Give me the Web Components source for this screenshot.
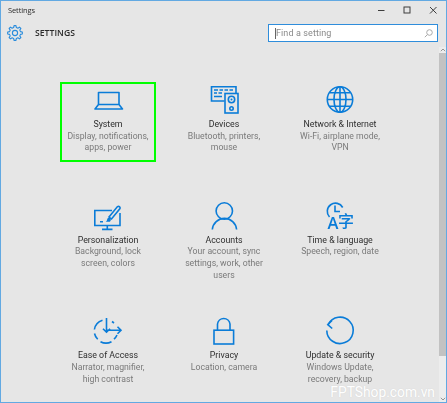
<!DOCTYPE html>
<html lang="en"><head><meta charset="utf-8"><title>Settings</title>
<style>
html,body{margin:0;padding:0;background:#e6e6e6}
body{font-family:Roboto,"Liberation Sans",sans-serif;width:447px;height:403px;overflow:hidden}
svg.i{display:block;overflow:visible}
.s{fill:none;stroke:#0a7cd8;stroke-width:1.6}
</style></head><body>
<template id="t-window"><style>
:host{display:flex;flex-direction:column;position:relative;box-sizing:border-box;width:447px;height:403px;border:1px solid #62a9e2;background:#e6e6e6;overflow:hidden}
.blur{display:flex;flex-direction:column;flex:1;min-height:0;filter:blur(.3px)}
.body{display:flex;flex:1;min-height:0}
.main{flex:1;min-width:0}
</style><div class="blur"><slot name="bar"></slot><slot name="head"></slot><div class="body"><div class="main"><slot></slot></div><slot name="scroll"></slot></div></div><slot name="over"></slot></template>

<template id="t-bar"><style>
:host{display:flex;align-items:center;height:18px;flex:none;padding:0 0 0 7px}
.t{flex:1;font:7.5px/10px "Open Sans",sans-serif;color:#2b2b2b;letter-spacing:-.1px}
.c{display:flex}
.c span{display:flex;width:26px;height:18px;align-items:center;justify-content:center}
svg{display:block;fill:none;stroke:#3c3c3c;stroke-width:1}
</style><div class="t"><slot></slot></div><div class="c">
<span><svg width="8" height="8"><path d="M1 4.5H7.5"/></svg></span>
<span><svg width="8" height="8"><rect x="1" y="1" width="6" height="6"/></svg></span>
<span><svg width="8" height="8"><path d="M1 1L7.5 7.5M7.5 1L1 7.5"/></svg></span></div></template>

<template id="t-head"><style>
:host{display:flex;align-items:center;flex:none;height:28px;padding:0 8px 0 5.5px;box-sizing:border-box}
svg{display:block;margin-right:12.5px;flex:none}
.l{flex:1;font:600 8.6px/12px "Open Sans",sans-serif;color:#2a2a2a;letter-spacing:.05px}
</style><svg id="g" width="16" height="16" viewBox="0 0 16 16"></svg><div class="l"><slot></slot></div><slot name="search"></slot></template>

<template id="t-search"><style>
:host{display:flex;align-items:center;box-sizing:border-box;width:170px;height:18px;border:1.5px solid #2f8ddb;background:#fff;padding:0 4px 0 6px}
.caret{width:1px;height:11px;background:#666;flex:none}
.p{flex:1;font:9px/12px Roboto,sans-serif;color:#8a8a8a;letter-spacing:.1px}
svg{display:block;fill:none;stroke:#aaa;stroke-width:1}
</style><span class="caret"></span><div class="p"><slot></slot></div>
<svg width="9" height="9"><circle cx="5.5" cy="3.5" r="2.8"/><path d="M3.5 5.5L.8 8.2"/></svg></template>

<template id="t-grid"><style>
:host{display:grid;grid-template-columns:repeat(3,116px);grid-template-rows:115.7px 115.7px auto;padding:35px 0 0 49px;box-sizing:border-box;height:100%}
</style><slot></slot></template>

<template id="t-tile"><style>
:host{display:block;min-width:0}
.box{box-sizing:border-box;margin:0 10px;min-height:80px;padding-top:2px;border:2px solid transparent;display:flex;flex-direction:column;align-items:center;text-align:center;white-space:nowrap}
:host([selected]) .box{border-color:#00ff00}
.ic{height:28px;margin-bottom:5px}
.n{font:400 8.8px/11.7px Roboto,sans-serif;color:#2e2e2e}
.d{font:400 8.7px/11.7px Roboto,sans-serif;color:#7a7a7a}
::slotted(span){display:block}
</style><div class="box"><div class="ic"><slot name="icon"></slot></div><div class="n"><slot name="name"></slot></div><div class="d"><slot name="desc"></slot></div></div></template>

<template id="t-scroll"><style>
:host{display:flex;flex-direction:column;width:7px;flex:none;background:#ededed}
.a{height:6px;display:flex;align-items:center;justify-content:center;flex:none}
.th{height:303px;background:#c2c2c2;flex:none}
.tr{flex:1}
svg{display:block;fill:none;stroke:#8a8a8a;stroke-width:.9}
</style><div class="a"><svg width="6" height="4"><path d="M.8 3.2L3 1L5.2 3.2"/></svg></div><div class="th"></div><div class="tr"></div><div class="a"><svg width="6" height="4"><path d="M.8 .8L3 3L5.2 .8"/></svg></div></template>

<template id="t-mark"><style>
:host{position:absolute;right:11px;bottom:2px;font:400 13.8px/16px Roboto,"Open Sans",sans-serif;color:#fff;text-shadow:0 0 1px rgba(150,150,150,.3)}
</style><slot></slot></template>

<settings-window>
<title-bar slot="bar">Settings</title-bar>
<settings-head slot="head">SETTINGS<search-box slot="search">Find a setting</search-box></settings-head>
<tile-grid>
<setting-tile selected>
<svg slot="icon" class="i" width="40" height="28"><path class="s" d="M10.5 18.5V6.5H31V18.5M10.5 18.5H31M10.5 18.5L7 23H34.5L31 18.5" stroke-linejoin="round"/></svg>
<span slot="name">System</span><span slot="desc">Display, notifications,</span><span slot="desc">apps, power</span></setting-tile>
<setting-tile>
<svg slot="icon" class="i" width="40" height="28"><path class="s" d="M20.5 15H7.5V.8H32V7"/><rect class="s" x="21" y="7.5" width="13" height="19.5"/><circle class="s" cx="27.5" cy="13.5" r="3.2"/><circle cx="27.5" cy="13.5" r="1" fill="#0a7cd8"/><circle class="s" cx="27.5" cy="22.5" r="1.7"/><path d="M10 4H14M15.5 4H19M20.5 4H24M25.5 4H29M10 7H13M14.5 7H18M10 10.5H18" stroke="#0a7cd8" stroke-width="1.4" fill="none"/></svg>
<span slot="name">Devices</span><span slot="desc">Bluetooth, printers,</span><span slot="desc">mouse</span></setting-tile>
<setting-tile>
<svg slot="icon" class="i" width="40" height="28"><circle class="s" cx="20" cy="13.5" r="12.7"/><ellipse class="s" cx="20" cy="13.5" rx="6" ry="12.7"/><path class="s" d="M20 .8V26.2M7.3 13.5H32.7M9.5 6.8H30.5M9.5 20.2H30.5"/></svg>
<span slot="name">Network &amp; Internet</span><span slot="desc">Wi-Fi, airplane mode,</span><span slot="desc">VPN</span></setting-tile>
<setting-tile>
<svg slot="icon" class="i" width="40" height="28"><path class="s" d="M24 8.5H6.8V23.5H32V11M19.3 23.5V27M14 27.4H24.5M12 19.7H15"/><path d="M21 15L29.5 4.6A1.7 1.7 0 0 1 32 6.6L23.5 17Z" fill="none" stroke="#0a7cd8" stroke-width="1.6"/><path d="M16 19.8C18.5 20 19 18.8 19.2 17.2C19.5 15.7 21 15.3 22 16.1C23.3 17.2 23 19 21.8 19.7H16Z" fill="#0a7cd8"/></svg>
<span slot="name">Personalization</span><span slot="desc">Background, lock</span><span slot="desc">screen, colors</span></setting-tile>
<setting-tile>
<svg slot="icon" class="i" width="40" height="28"><circle class="s" cx="20.3" cy="9" r="8.2"/><path class="s" d="M8.3 27.5A12.2 12.2 0 0 1 32.6 27.5"/></svg>
<span slot="name">Accounts</span><span slot="desc">Your account, sync</span><span slot="desc">settings, work, other</span><span slot="desc">users</span></setting-tile>
<setting-tile>
<svg slot="icon" class="i" width="40" height="34"><path class="s" d="M9.5 15A8.2 8.2 0 1 1 22.7 5.5M15 3.5V9.5H20"/><text x="7.5" y="27.3" font-family="Open Sans,sans-serif" font-size="16.5" font-weight="600" fill="#0a7cd8">A</text><text x="18" y="24.6" font-family="Noto Sans CJK SC,sans-serif" font-size="16" font-weight="500" fill="#0a7cd8">字</text></svg>
<span slot="name">Time &amp; language</span><span slot="desc">Speech, region, date</span></setting-tile>
<setting-tile>
<svg slot="icon" class="i" width="40" height="28"><path class="s" d="M14.5 3.2A11.6 11.6 0 0 0 6.4 12.5M6.5 16.5A11.6 11.6 0 0 0 9.7 22.2M12.5 24.7A11.6 11.6 0 0 0 23.5 24.7M26 22.2A11.6 11.6 0 0 0 29 18M24 4.5L26 6"/><path class="s" d="M18.5 1V15M15 11.7L18.5 15.2L22 11.7M18.5 13.2H33M29.5 9.7L33 13.2L29.5 16.7"/></svg>
<span slot="name">Ease of Access</span><span slot="desc">Narrator, magnifier,</span><span slot="desc">high contrast</span></setting-tile>
<setting-tile>
<svg slot="icon" class="i" width="40" height="28"><rect class="s" x="10" y="13.2" width="19.6" height="13.8"/><path class="s" d="M13.5 13V7A6.3 6.3 0 0 1 26 7V13"/></svg>
<span slot="name">Privacy</span><span slot="desc">Location, camera</span></setting-tile>
<setting-tile>
<svg slot="icon" class="i" width="40" height="28"><path class="s" d="M8.2 7.4A13.2 13.2 0 1 1 6.8 13.4"/><path class="s" d="M12 3.4L7.8 7.6L12.2 11.5"/></svg>
<span slot="name">Update &amp; security</span><span slot="desc">Windows Update,</span><span slot="desc">recovery, backup</span></setting-tile>
</tile-grid>
<scroll-bar slot="scroll"></scroll-bar>
<water-mark slot="over">FPTShop.com.vn</water-mark>
</settings-window>
<script>
function def(tag,tpl,init){customElements.define(tag,class extends HTMLElement{constructor(){super();const r=this.attachShadow({mode:"open"});r.appendChild(document.getElementById(tpl).content.cloneNode(true));if(init)init(r)}})}
function gear(){const cx=8,cy=8,n=8;let d="";const R=7.4,r=5.6;for(let i=0;i<n;i++){const a=i*2*Math.PI/n-Math.PI/2,w=Math.PI/n;[[r,-w*.62],[R,-w*.34],[R,w*.34],[r,w*.62]].forEach((p,j)=>{d+=((i||j)?"L":"M")+(cx+p[0]*Math.cos(a+p[1])).toFixed(2)+" "+(cy+p[0]*Math.sin(a+p[1])).toFixed(2)})}return d+"Z"}
def("settings-window","t-window");def("title-bar","t-bar");
def("settings-head","t-head",r=>{r.getElementById("g").innerHTML='<path d="'+gear()+'" fill="none" stroke="#2a8cdc" stroke-width="1.1" stroke-linejoin="round"/><circle cx="8" cy="8" r="2.6" fill="none" stroke="#2a8cdc" stroke-width="1.1"/>'});
def("search-box","t-search");def("tile-grid","t-grid");def("setting-tile","t-tile");def("scroll-bar","t-scroll");def("water-mark","t-mark");
</script>
</body></html>
